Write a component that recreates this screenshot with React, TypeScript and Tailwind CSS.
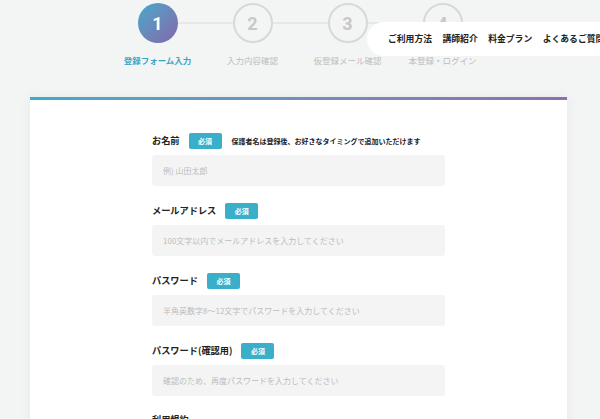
import React from "react";

const steps = [
  { num: "1", label: "登録フォーム入力", active: true },
  { num: "2", label: "入力内容確認", active: false },
  { num: "3", label: "仮登録メール確認", active: false },
  { num: "4", label: "本登録・ログイン", active: false },
];

const fields = [
  { label: "お名前", placeholder: "例) 山田太郎", note: "保護者名は登録後、お好きなタイミングで追加いただけます" },
  { label: "メールアドレス", placeholder: "100文字以内でメールアドレスを入力してください" },
  { label: "パスワード", placeholder: "半角英数字8〜12文字でパスワードを入力してください" },
  { label: "パスワード(確認用)", placeholder: "確認のため、再度パスワードを入力してください" },
];

const Badge = () => (
  <span className="flex h-[16px] w-[33px] items-center justify-center rounded-[2px] bg-[#3aafca] text-[7px] font-bold text-white">
    必須
  </span>
);

const App = () => {
  return (
    <div
      className="relative min-h-[419px] overflow-hidden bg-[#f3f4f4]"
      style={{ fontFamily: '"Noto Sans CJK JP", "Noto Sans", sans-serif' }}
    >
      {/* Steps */}
      <div className="flex flex-col items-center pt-[3px]">
        <div className="flex items-center">
          {steps.map((s, i) => (
            <React.Fragment key={s.num}>
              {s.active ? (
                <div className="flex h-[40px] w-[40px] items-center justify-center rounded-full bg-gradient-to-br from-[#3aa9cb] to-[#7f66aa] font-['Roboto'] text-[18px] font-bold text-white">
                  {s.num}
                </div>
              ) : (
                <div className="flex h-[40px] w-[40px] items-center justify-center rounded-full border-2 border-[#d8d8d8] font-['Roboto'] text-[18px] font-bold text-[#c8c8c8]">
                  {s.num}
                </div>
              )}
              {i < steps.length - 1 && <div className="h-[2px] w-[55px] bg-[#e6e7e7]" />}
            </React.Fragment>
          ))}
        </div>
        <div className="mt-[11px] grid w-[380px] grid-cols-4">
          {steps.map((s) => (
            <div
              key={s.num}
              className={`text-center text-[8.5px] leading-[12px] ${s.active ? "font-bold text-[#3aa6c6]" : "text-[#bdbdbd]"}`}
            >
              {s.label}
            </div>
          ))}
        </div>
      </div>

      {/* Floating nav */}
      <nav className="absolute left-[367px] right-0 top-[22px] flex h-[34px] items-center gap-[10.5px] rounded-l-full bg-white pl-[21px] text-[8.8px] font-bold text-[#222] whitespace-nowrap">
        <span>ご利用方法</span>
        <span>講師紹介</span>
        <span>料金プラン</span>
        <span>よくあるご質問</span>
      </nav>

      {/* Card */}
      <div className="ml-[30px] mt-[31px] w-[537px] bg-white shadow-[0_0_12px_rgba(0,0,0,0.05)]">
        <div className="h-[3px] bg-gradient-to-r from-[#3aaccb] to-[#8c6fb0]" />
        <div className="mx-auto w-[293px] pt-[33px] pb-[40px]">
          {fields.map((f) => (
            <div key={f.label} className="mb-[17px]">
              <div className="flex h-[16px] items-center">
                <span className="mr-[9px] text-[9.2px] font-bold text-[#222]">{f.label}</span>
                <Badge />
                {f.note && <span className="ml-[10px] text-[7px] font-bold text-[#222] whitespace-nowrap">{f.note}</span>}
              </div>
              <div className="mt-[6px] flex h-[31px] items-center rounded-[3px] bg-[#f4f4f4] pl-[11px] text-[8px] text-[#bcbcbc]">
                {f.placeholder}
              </div>
            </div>
          ))}
          <div className="text-[9.2px] font-bold text-[#222]">利用規約</div>
        </div>
      </div>
    </div>
  );
};

export default App;
